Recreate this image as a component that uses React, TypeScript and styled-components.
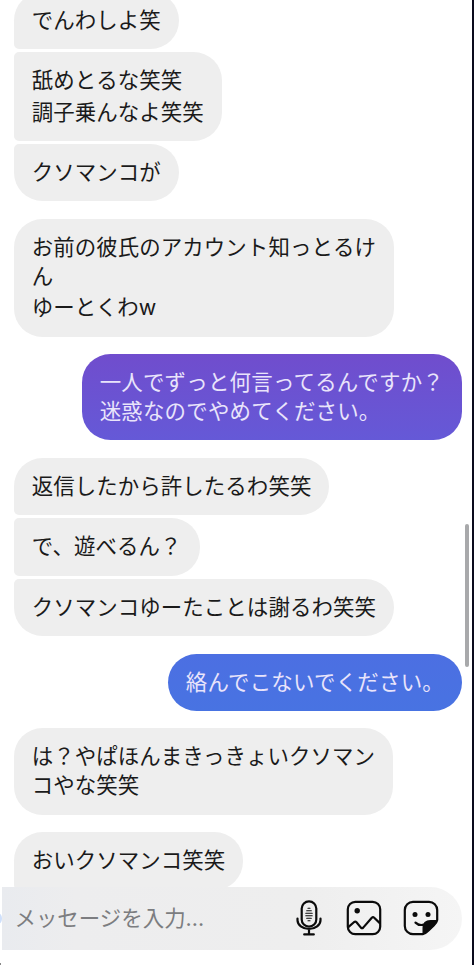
import React from 'react';
import styled, { createGlobalStyle } from 'styled-components';

const GlobalStyle = createGlobalStyle`
  * { box-sizing: border-box; }
  body { margin: 0; background: #fff; }
`;

const Screen = styled.main`
  position: relative;
  display: flex;
  flex-direction: column;
  width: 474px;
  height: 965px;
  overflow: hidden;
  background: #fff;
  border-right: 2.5px solid #0a0a1c;
  font-family: Inter, 'Noto Sans CJK JP', sans-serif;
  font-size: 21.45px;
  color: #1a1a1a;
`;

const Thread = styled.section`
  display: flex;
  flex-direction: column;
  gap: 17.5px;
  height: 886.5px;
  overflow: hidden;
  padding: 0 10px 0 14px;
`;

const Group = styled.div<{ $mine?: boolean; $clipped?: boolean }>`
  display: flex;
  flex: none;
  flex-direction: column;
  align-items: ${p => (p.$mine ? 'flex-end' : 'flex-start')};
  gap: 3px;
  margin-top: ${p => (p.$clipped ? '-8.5px' : '0')};
`;

type Tone = 'grey' | 'violet' | 'blue';
const fills: Record<Tone, string> = {
  grey: '#eeeeee',
  violet: 'linear-gradient(#704dcd, #6559d7)',
  blue: 'linear-gradient(#4c6fe2, #4873e2)',
};

const Bubble = styled.div<{ $tone: Tone; $joinTop: boolean; $joinBottom: boolean }>`
  padding: 14px 18px 14.6px 17.8px;
  background: ${p => fills[p.$tone]};
  color: ${p => (p.$tone === 'grey' ? '#1a1a1a' : '#e9e4fb')};
  letter-spacing: ${p => (p.$tone === 'grey' ? 0.07 : 0.22)}px;
  border-radius: ${p => (p.$joinTop ? 5 : 28.5)}px 28.5px 28.5px ${p => (p.$joinBottom ? 5 : 28.5)}px;
`;

const Line = styled.div<{ $tall?: boolean }>`
  height: ${p => (p.$tall ? 31.7 : 28.8)}px;
  line-height: ${p => (p.$tall ? 34.8 : 28.8)}px;
  white-space: nowrap;
`;

const Composer = styled.footer`
  display: flex;
  align-items: center;
  width: 460px;
  height: 63px;
  margin-left: 2px;
  padding: 0 22.8px 0 12.5px;
  border-radius: 0 31.5px 31.5px 0;
  background: linear-gradient(90deg, #e9ebef 0, #ededee 16%, #eeeeee 65%, #f5f5f5 100%);
`;

const Placeholder = styled.span`
  flex: 1;
  color: #7c7d80;
  line-height: 30px;
`;

const Tools = styled.div`
  display: flex;
  align-items: center;
  gap: 21.2px;
`;

const Icon = styled.svg`
  display: block;
  width: 36px;
  height: 36px;
  fill: none;
  stroke: #0b0b0b;
  stroke-width: 2.2;
  stroke-linecap: round;
  stroke-linejoin: round;
`;

const MicSvg = styled(Icon)`
  margin-right: -2.3px;
`;

const ScrollThumb = styled.div`
  position: absolute;
  top: 524px;
  right: 3px;
  width: 4px;
  height: 143px;
  border-radius: 2px;
  background: #a8a9ab;
`;

const SendEdge = styled.div`
  position: absolute;
  left: -6px;
  top: 913px;
  width: 8px;
  height: 11px;
  border-radius: 50%;
  background: #cfe0fb;
`;

const CornerMark = styled.div`
  position: absolute;
  left: 0;
  bottom: 0;
  width: 1px;
  height: 2px;
  background: #888;
`;

interface Message { lines: string[]; tall?: number[]; tone?: Tone }

const groups: Message[][] = [
  [
    { lines: ['でんわしよ笑'] },
    { lines: ['舐めとるな笑笑', '調子乗んなよ笑笑'], tall: [1] },
    { lines: ['クソマンコが'] },
  ],
  [{ lines: ['お前の彼氏のアカウント知っとるけ', 'ん', 'ゆーとくわw'], tall: [2] }],
  [{ lines: ['一人でずっと何言ってるんですか？', '迷惑なのでやめてください。'], tone: 'violet' }],
  [
    { lines: ['返信したから許したるわ笑笑'] },
    { lines: ['で、遊べるん？'] },
    { lines: ['クソマンコゆーたことは謝るわ笑笑'] },
  ],
  [{ lines: ['絡んでこないでください。'], tone: 'blue' }],
  [{ lines: ['は？やぱほんまきっきょいクソマン', 'コやな笑笑'] }],
  [{ lines: ['おいクソマンコ笑笑'] }],
];

const MicIcon = () => (
  <MicSvg viewBox="0 0 36 36" aria-label="mic">
    <rect x="10.7" y="1.3" width="14.6" height="25.4" rx="7.3" />
    <path d="M6.5 18.5v1.7a11.5 8.8 0 0 0 23 0v-1.7M18 29.2v4.6M13.2 34.4h9.6" />
    <path strokeWidth="1.15" d="M17 8.2h2M15.7 10.7h4.6M14.8 13.2h6.4M14.8 15.7h6.4M15.7 18.2h4.6M17 20.7h2" />
  </MicSvg>
);

const PhotoIcon = () => (
  <Icon viewBox="0 0 36 36" aria-label="photo">
    <rect x="1.8" y="1.8" width="32.4" height="32.4" rx="7.5" />
    <circle cx="11.2" cy="10.8" r="2.7" fill="#0b0b0b" stroke="none" />
    <path d="M2.3 27.2 8.2 22q1.2-.9 2.3.3l4.4 5.3q1.2 1.1 2.3 0l8.6-9.9q1.2-1.1 2.4 0l5.6 5.4" />
  </Icon>
);

const StickerIcon = () => (
  <Icon viewBox="0 0 36 36" aria-label="sticker">
    <path d="M19.8 34.2H10A8.2 8.2 0 0 1 1.8 26V10A8.2 8.2 0 0 1 10 1.8h16a8.2 8.2 0 0 1 8.2 8.2v10" />
    <circle cx="12" cy="14.4" r="2.5" fill="#0b0b0b" stroke="none" />
    <circle cx="25" cy="14.4" r="2.5" fill="#0b0b0b" stroke="none" />
    <path d="M12.5 22.6c2.2 2.2 5.2 2.9 8.5 2" />
    <path fill="#0b0b0b" strokeWidth="1.4" d="M20.2 34.3V28q0-7.4 7.6-7.4h6.6c-.4 2.2-1.8 3.6-3.4 5.1l-5.5 5.3c-1.8 1.8-3 3-5.3 3.3z" />
  </Icon>
);

export default function App() {
  return (
    <>
      <GlobalStyle />
      <Screen>
        <Thread>
          {groups.map((group, g) => (
            <Group key={g} $clipped={g === 0} $mine={!!group[0].tone}>
              {group.map((message, i) => (
                <Bubble
                  key={i}
                  $tone={message.tone ?? 'grey'}
                  $joinTop={i > 0}
                  $joinBottom={i < group.length - 1 || g === groups.length - 1}
                >
                  {message.lines.map((text, n) => (
                    <Line key={n} $tall={message.tall?.includes(n)}>{text}</Line>
                  ))}
                </Bubble>
              ))}
            </Group>
          ))}
        </Thread>
        <Composer>
          <Placeholder>メッセージを入力...</Placeholder>
          <Tools>
            <MicIcon />
            <PhotoIcon />
            <StickerIcon />
          </Tools>
        </Composer>
        <ScrollThumb />
        <SendEdge />
        <CornerMark />
      </Screen>
    </>
  );
}
